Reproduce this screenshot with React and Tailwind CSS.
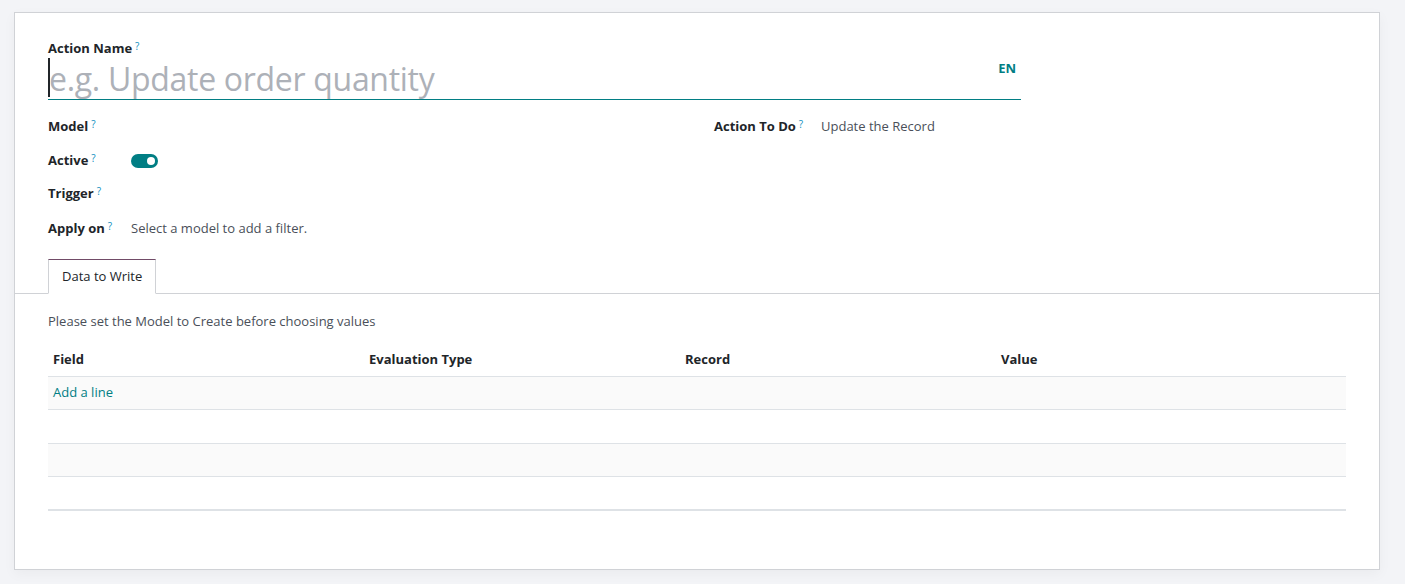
import React from "react";

const Q = () => (
  <sup className="ml-[3px] text-[10px] font-normal text-[#0f8fc0] relative -top-[3px]">?</sup>
);

function Label({ children, w = "w-[83px]" }) {
  return (
    <div className={`${w} shrink-0 font-bold text-[#212529] text-[13px]`}>
      {children}
      <Q />
    </div>
  );
}

export default function App() {
  return (
    <div
      className="w-[1405px] h-[584px] bg-[#f3f4f7] pt-[12px] pl-[14px]"
      style={{ fontFamily: '"Open Sans", "Noto Sans", sans-serif' }}
    >
      <div className="w-[1366px] h-[558px] bg-white border border-[#d0d2d6] shadow-[0_4px_12px_rgba(0,0,0,0.04)] flex flex-col">
        <div className="px-[33px] pt-[26px]">
          <div className="h-[20px] flex items-center text-[13px] font-bold text-[#212529]">
            Action Name
            <Q />
          </div>
          <div className="w-[973px] h-[41px] border-b border-[#017e84] flex items-center relative">
            <div className="absolute left-0 top-[-1px] w-[2px] h-[39px] bg-[#212529]" />
            <span className="text-[32px] text-[#adb1b8] leading-none pl-[1px] tracking-[-0.3px]">
              e.g. Update order quantity
            </span>
            <span className="ml-auto mr-[5px] mb-[20px] text-[13px] font-bold text-[#017e84]">EN</span>
          </div>
          <div className="flex mt-[16px]">
            <div className="w-[666px] flex flex-col">
              <div className="h-[22px] flex items-center">
                <Label>Model</Label>
              </div>
              <div className="h-[22px] mt-[12px] flex items-center">
                <Label>Active</Label>
                <div className="w-[27px] h-[14px] rounded-full bg-[#017e84] relative">
                  <div className="absolute right-[3px] top-[3px] w-[8px] h-[8px] rounded-full bg-white" />
                </div>
              </div>
              <div className="h-[22px] mt-[11px] flex items-center">
                <Label>Trigger</Label>
              </div>
              <div className="h-[22px] mt-[13px] flex items-center">
                <Label>Apply on</Label>
                <span className="text-[13px] text-[#4a4f59]">Select a model to add a filter.</span>
              </div>
            </div>
            <div className="flex-1">
              <div className="h-[22px] flex items-center">
                <Label w="w-[107px]">Action To Do</Label>
                <span className="text-[13px] text-[#4a4f59]">Update the Record</span>
              </div>
            </div>
          </div>
        </div>
        <div className="mt-[19px] border-b border-[#d0d2d6] px-[33px] flex">
          <div className="h-[35px] -mb-px px-[13px] flex items-center bg-white border border-[#d0d2d6] border-t-[#714b67] border-b-white text-[13px] text-[#212529]">
            Data to Write
          </div>
        </div>
        <div className="px-[33px]">
          <div className="mt-[19px] h-[18px] flex items-center text-[13px] text-[#4a4f59]">
            Please set the Model to Create before choosing values
          </div>
          <div className="mt-[13px] w-[1298px]">
            <div className="h-[33px] grid grid-cols-[316px_316px_316px_1fr] items-center border-b border-[#dee2e6] text-[13px] font-bold text-[#212529]">
              <div className="pl-[5px]">Field</div>
              <div className="pl-[5px]">Evaluation Type</div>
              <div className="pl-[5px]">Record</div>
              <div className="pl-[5px]">Value</div>
            </div>
            <div className="h-[33px] bg-[#fafafa] border-b border-[#dee2e6] flex items-center pl-[5px] text-[13px] text-[#017e84]">
              Add a line
            </div>
            <div className="h-[34px] bg-white border-b border-[#dee2e6]" />
            <div className="h-[33px] bg-[#fafafa] border-b border-[#dee2e6]" />
            <div className="h-[34px] bg-white border-b-2 border-[#dee2e6]" />
          </div>
        </div>
      </div>
    </div>
  );
}
